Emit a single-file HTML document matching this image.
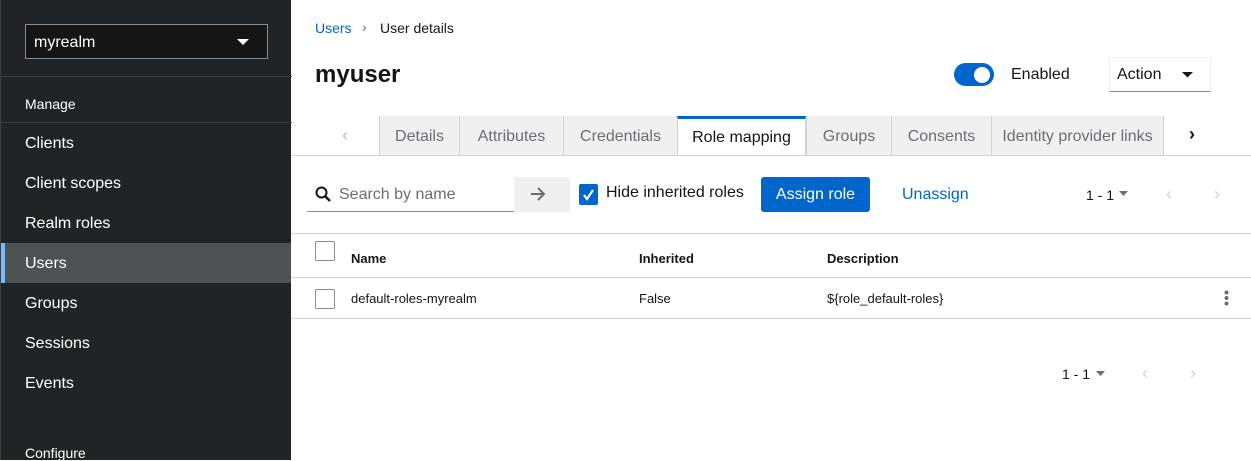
<!DOCTYPE html><html><head><style>
*{box-sizing:border-box;margin:0;padding:0}
body{width:1251px;height:460px;overflow:hidden;font-family:"Liberation Sans",sans-serif;background:#fff;position:relative;color:#151515}
.a{position:absolute;white-space:nowrap}
.sb{position:absolute;left:0;top:0;width:291px;height:460px;background:#212427;border-left:1px solid #3c3f42}
.sb .a{color:#fff;font-size:16px}
.ln{position:absolute;height:1px;background:#d2d2d2}
.tab{position:absolute;top:116px;height:39px;background:#f0f0f0;border-left:1px solid #d2d2d2;color:#6a6e73;font-size:16px;line-height:41px;text-align:center}
.cb{position:absolute;width:20px;height:20px;border:1px solid #8a8d90;border-radius:2px;background:#fff}
.th{font-size:13px;font-weight:bold;top:251px}
.td{font-size:13px;top:291px}
</style></head><body>
<div class="sb">
<div class="a" style="left:24px;top:24px;width:243px;height:35px;border:1px solid #8a8d90;background:#151515"></div>
<div class="a" style="left:33px;top:34px">myrealm</div>
<svg class="a" style="left:236px;top:38px" width="12" height="8"><path d="M0 1h12L6 7z" fill="#fff"/></svg>
<div class="a" style="left:0;top:76px;width:291px;height:1px;background:#3c3f42"></div>
<div class="a" style="left:24px;top:96px;font-size:14px!important">Manage</div>
<div class="a" style="left:0;top:122px;width:291px;height:1px;background:#3c3f42"></div>
<div class="a" style="left:24px;top:135px">Clients</div>
<div class="a" style="left:24px;top:175px">Client scopes</div>
<div class="a" style="left:24px;top:215px">Realm roles</div>
<div class="a" style="left:0;top:243px;width:290px;height:40px;background:#4f5255;border-left:4px solid #73bcf7"></div>
<div class="a" style="left:24px;top:255px">Users</div>
<div class="a" style="left:24px;top:295px">Groups</div>
<div class="a" style="left:24px;top:335px">Sessions</div>
<div class="a" style="left:24px;top:375px">Events</div>
<div class="a" style="left:24px;top:445px;font-size:14px!important">Configure</div>
</div>
<div class="a" style="left:315px;top:20px;font-size:14px;color:#06c">Users</div>
<div class="a" style="left:362px;top:19px;font-size:14px;color:#6a6e73">›</div>
<div class="a" style="left:380px;top:20px;font-size:14px">User details</div>
<div class="a" style="left:315px;top:61px;font-size:24px;font-weight:bold">myuser</div>
<div class="a" style="left:954px;top:63px;width:40px;height:23px;border-radius:12px;background:#06c"></div>
<div class="a" style="left:974px;top:67px;width:16px;height:16px;border-radius:8px;background:#fff"></div>
<div class="a" style="left:1011px;top:66px;font-size:16px">Enabled</div>
<div class="a" style="left:1109px;top:57px;width:102px;height:35px;border:1px solid #f0f0f0;border-bottom-color:#8a8d90"></div>
<div class="a" style="left:1117px;top:66px;font-size:16px">Action</div>
<svg class="a" style="left:1182px;top:71px" width="11" height="7"><path d="M0 1h11L5.5 6.5z" fill="#151515"/></svg>
<div class="a" style="left:342px;top:125px;font-size:18px;color:#b8bbbe">‹</div>
<div class="tab" style="left:379px;width:80px">Details</div>
<div class="tab" style="left:459px;width:104px">Attributes</div>
<div class="tab" style="left:563px;width:114px">Credentials</div>
<div class="tab" style="left:677px;width:129px;background:#fff;color:#151515;border-top:3px solid #06c;border-right:1px solid #d2d2d2;line-height:37px;height:40px">Role mapping</div>
<div class="tab" style="left:806px;width:85px">Groups</div>
<div class="tab" style="left:891px;width:100px">Consents</div>
<div class="tab" style="left:991px;width:173px;border-right:1px solid #d2d2d2">Identity provider links</div>
<div class="a" style="left:1189px;top:124px;font-size:18px;font-weight:bold">›</div>
<div class="ln" style="left:291px;top:155px;width:960px"></div>
<div class="a" style="left:307px;top:177px;width:207px;height:35px;border-bottom:1px solid #8a8d90"></div>
<svg class="a" style="left:315px;top:186px" width="16" height="16"><circle cx="6.5" cy="6.5" r="5" stroke="#151515" stroke-width="2" fill="none"/><path d="M10 10l5 5" stroke="#151515" stroke-width="2.5"/></svg>
<div class="a" style="left:339px;top:186px;font-size:16px;color:#6a6e73">Search by name</div>
<div class="a" style="left:514px;top:177px;width:56px;height:35px;background:#f0f0f0"></div>
<svg class="a" style="left:530px;top:187px" width="16" height="14"><path d="M1 7h13M8 1l6 6-6 6" stroke="#6a6e73" stroke-width="2" fill="none"/></svg>
<div class="a" style="left:579px;top:184px;width:19px;height:21px;background:#06c;border-radius:2px"></div>
<svg class="a" style="left:581px;top:187px" width="15" height="15"><path d="M3 8l3 4 6-9" stroke="#fff" stroke-width="2.2" fill="none"/></svg>
<div class="a" style="left:606px;top:184px;font-size:16px">Hide inherited roles</div>
<div class="a" style="left:761px;top:177px;width:109px;height:35px;background:#06c;border-radius:3px;color:#fff;font-size:16px;text-align:center;line-height:35px">Assign role</div>
<div class="a" style="left:902px;top:186px;font-size:16px;color:#06c">Unassign</div>
<div class="a" style="left:1086px;top:187px;font-size:14px">1 - 1</div>
<svg class="a" style="left:1119px;top:191px" width="9" height="6"><path d="M0 0h9L4.5 5z" fill="#6a6e73"/></svg>
<div class="a" style="left:1166px;top:184px;font-size:18px;color:#d2d2d2">‹</div>
<div class="a" style="left:1214px;top:184px;font-size:18px;color:#d2d2d2">›</div>
<div class="ln" style="left:291px;top:233px;width:960px"></div>
<div class="cb" style="left:315px;top:241px"></div>
<div class="a th" style="left:351px">Name</div>
<div class="a th" style="left:639px">Inherited</div>
<div class="a th" style="left:827px">Description</div>
<div class="ln" style="left:291px;top:277px;width:960px"></div>
<div class="cb" style="left:315px;top:289px"></div>
<div class="a td" style="left:351px">default-roles-myrealm</div>
<div class="a td" style="left:639px">False</div>
<div class="a td" style="left:827px">${role_default-roles}</div>
<svg class="a" style="left:1224px;top:290px" width="5" height="16"><circle cx="2.5" cy="2.5" r="2" fill="#6a6e73"/><circle cx="2.5" cy="8" r="2" fill="#6a6e73"/><circle cx="2.5" cy="13.5" r="2" fill="#6a6e73"/></svg>
<div class="ln" style="left:291px;top:318px;width:960px"></div>
<div class="a" style="left:1062px;top:366px;font-size:14px">1 - 1</div>
<svg class="a" style="left:1096px;top:371px" width="9" height="6"><path d="M0 0h9L4.5 5z" fill="#6a6e73"/></svg>
<div class="a" style="left:1142px;top:363px;font-size:18px;color:#d2d2d2">‹</div>
<div class="a" style="left:1190px;top:363px;font-size:18px;color:#d2d2d2">›</div>
</body></html>
